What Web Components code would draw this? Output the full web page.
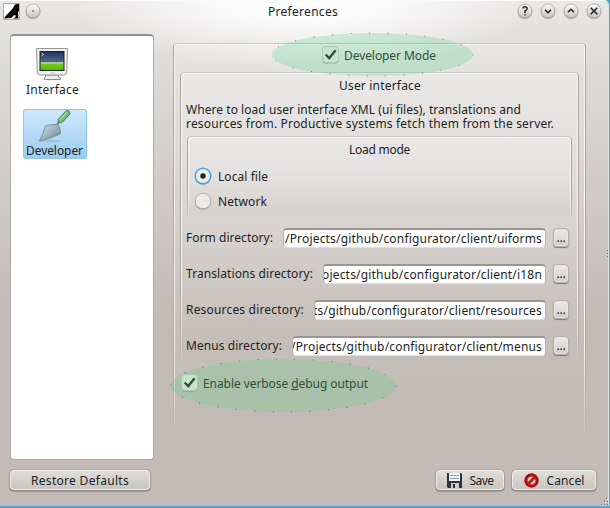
<!DOCTYPE html>
<html lang="en"><head><meta charset="utf-8"><title>Preferences</title>
<style>
html,body{margin:0;height:100%;overflow:hidden}
body{font:12px/16px "Noto Sans","Open Sans",sans-serif;color:#221f1e;background:#4fa6cd}
</style></head><body>
<pref-window></pref-window>

<template id="t-window"><style>
:host{display:flex;flex-direction:column;box-sizing:border-box;width:609px;height:506px;position:relative;border-top:1px solid #fafafa;border-right:1px solid #e5e0de;border-radius:0 5px 0 0;
background:radial-gradient(ellipse 235px 66px at 304px 0,#fff 0,rgba(255,255,255,.75) 40%,rgba(255,255,255,0) 100%),linear-gradient(#e8e7e6 0,#dcdad8 70px,#d1ccca 180px,#c5bcb9 300px,#c4bab7 330px)}
header{display:grid;grid-template-columns:22px 230px 1fr auto;height:33px;align-items:start;padding:2px 6px 0 3px;box-sizing:border-box}
header>svg{display:block;width:17px;height:17px}
.ctl{display:flex;gap:7px}
main{display:grid;grid-template-columns:144px 413px;column-gap:19px;padding-left:10px;height:427px}
.list{background:#fff;border:1px solid #b0aaa7;border-top:2px solid #95918f;border-radius:4px;box-sizing:border-box;padding:12px 0 0 12px;height:426px}
nav-item+nav-item{margin-top:11px}
footer{display:flex;padding:9px 12px 0 10px;gap:8px}
.sp{flex:1}
.body{padding:0 7px}
p{margin:9px 0 0 6px;line-height:14px}
.radios{padding:9px 0 0 7px;display:grid;gap:7px}
.rows{display:grid;gap:15px;padding:9px 10px 0 6px}
.grip{position:absolute;right:0;bottom:0}
.side{position:absolute;right:-1px;top:248px}
</style>
<header>
<svg viewBox="0 0 17 17"><path fill="#fff" stroke="#78b9e2" d="M.5.5h16v16H.5z"/><path d="M1 15.500 3.500 12 7 8.500 10 5l2-3.500L14 1h2v7l-1 1 .4 6.500H10l2.500-1.300V12l-2 .5-2 2.500z"/></svg>
<title-button kind="dot"></title-button>
<fit-text w="70" style="margin:1px 0 0 13px">Preferences</fit-text>
<div class="ctl"><title-button kind="help"></title-button><title-button kind="down"></title-button><title-button kind="up"></title-button><title-button kind="close"></title-button></div>
</header>
<main>
<div class="list">
<nav-item><svg slot="icon" width="34" height="33" viewBox="0 0 34 33"><defs><linearGradient id="s" x2="0" y2="1"><stop stop-color="#1d3264"/><stop offset=".55" stop-color="#566b82"/><stop offset=".6" stop-color="#c7e7a1"/><stop offset=".68" stop-color="#73c91e"/><stop offset="1" stop-color="#51bd0c"/></linearGradient></defs><ellipse cx="17" cy="31" rx="10" ry="1.500" fill="#ddd"/><path fill="#eee" stroke="#8a8a88" d="M10.500 27h13v2l2 1v1.500h-16V30l1-1z"/><path fill="#f1f1ee" stroke="#969693" d="M1.500.5h31l-.8 25-1.700 1.500H4l-1.700-1.500z"/><path fill="#222" d="M4.500 3h25v20h-25z"/><path fill="url(#s)" d="M5.500 4h23v18h-23z"/><path stroke="#fff" fill="none" stroke-width=".8" d="m6.500 5 2 1.500-2 1.500"/><path stroke="#bbb" d="M15 25h5"/></svg><fit-text w="53">Interface</fit-text></nav-item>
<nav-item selected><svg slot="icon" width="36" height="34" viewBox="0 0 36 34"><defs><linearGradient id="b" x2="1" y2="1"><stop stop-color="#d3dfe4"/><stop offset=".5" stop-color="#a0b4be"/><stop offset="1" stop-color="#627984"/></linearGradient></defs><ellipse cx="16" cy="32" rx="12" ry="1.200" fill="#709dbd" opacity=".3"/><path d="M22.500 18q-1-4 3-6" fill="none" stroke="#5d737d" stroke-width="1.600"/><path fill="url(#b)" stroke="#6e848f" stroke-width=".8" stroke-linejoin="round" d="M4.500 32Q8.500 24 10 18q.3-1.500 2-1.700L22.500 15.300q1.200 0 1.500 2l1.500 6q.3 1.200-1 2Q15 30 4.500 32z"/><path stroke="#3f7c4b" stroke-width="5.600" stroke-linecap="round" d="m25.500 11.500 7-7.500"/><path stroke="#76ba7e" stroke-width="4.200" stroke-linecap="round" d="m25.500 11.500 7-7.500"/><path stroke="#a6d9a9" stroke-width="1.200" d="m24.500 11 7-7.500"/></svg><fit-text w="57">Developer</fit-text></nav-item>
</div>
<group-box style="height:397px;margin-top:9px">
 <check-box style="padding:4px 0 0 149px"><fit-text w="92">Developer Mode</fit-text></check-box>
 <div class="body">
 <group-box style="height:294px;margin-top:8px">
  <fit-text w="82" style="margin:6px 0 0 159px">User interface</fit-text>
  <p><fit-text w="335">Where to load user interface XML (ui files), translations and</fit-text><fit-text w="368">resources from. Productive systems fetch them from the server.</fit-text></p>
  <group-box style="height:83px;margin:5px 7px 0">
   <fit-text w="61" style="margin:6px 0 0 162px">Load mode</fit-text>
   <div class="radios"><radio-item checked><fit-text w="50">Local file</fit-text></radio-item><radio-item><fit-text w="49">Network</fit-text></radio-item></div>
  </group-box>
  <div class="rows">
  <path-row field="263"><fit-text w="87">Form directory:</fit-text><fit-text slot="path" w="257">/Projects/github/configurator/client/uiforms</fit-text></path-row>
  <path-row field="223"><fit-text w="127">Translations directory:</fit-text><fit-text slot="path" w="220">ojects/github/configurator/client/i18n</fit-text></path-row>
  <path-row field="232"><fit-text w="118">Resources directory:</fit-text><fit-text slot="path" w="229">ts/github/configurator/client/resources</fit-text></path-row>
  <path-row field="254"><fit-text w="96">Menus directory:</fit-text><fit-text slot="path" w="251">/Projects/github/configurator/client/menus</fit-text></path-row>
  </div>
 </group-box>
 </div>
 <check-box style="padding:9px 0 0 8px"><fit-text w="165">Enable verbose <u>d</u>ebug output</fit-text></check-box>
</group-box>
</main>
<footer><push-button style="width:140px"><fit-text w="98">Restore Defaults</fit-text></push-button><div class="sp"></div>
<push-button style="width:68px"><svg slot="icon" width="15" height="15" viewBox="0 0 15 15"><path fill="#303238" d="M0 0h14l1 1v14H1L0 14z"/><path fill="#f2f6fa" d="M2 0h11v8H2z"/><path stroke="#7ba2c8" d="M3 2.500h9M3 5.500h9"/><path fill="#c8c8c8" d="M4 10h8v5H4z"/><path fill="#303238" d="M6 11h2v4H6z"/></svg><fit-text w="24">Save</fit-text></push-button>
<push-button wide style="width:84px"><svg slot="icon" width="15" height="15" viewBox="0 0 15 15"><circle cx="7.500" cy="7.500" r="7.200" fill="#a50d0d"/><circle cx="7.500" cy="7.500" r="4.300" fill="#d8cfcc" stroke="#d43a32"/><path stroke="#b41a16" stroke-width="2.800" d="m4 11 7-7"/></svg><fit-text w="38">Cancel</fit-text></push-button></footer>
<svg class="side" width="3" height="9"><path stroke="#77706e" stroke-dasharray="1 2" d="M1.500 1v8"/></svg>
<svg class="grip" width="8" height="8"><path fill="#77706e" d="M6 0h1v1H6zM4 3h1v1H4zM7 3h1v1H7zM1 6h1v1H1zM4 6h1v1H4zM7 6h1v1H7z"/><path fill="#eee" d="M7 1h1v1H7zM5 4h1v1H5zM2 7h1v1H2zM5 7h1v1H5z"/></svg>
<green-mark style="left:272px;top:32px;width:201px;height:43px"></green-mark>
<green-mark style="left:171px;top:358px;width:225px;height:53px"></green-mark>
</template>

<script>
const def=(name,html,init)=>customElements.define(name,class extends HTMLElement{
  connectedCallback(){
    if(this.shadowRoot)return;
    this.attachShadow({mode:'open'}).innerHTML=typeof html==='function'?html(this):html;
    if(init)init(this);
  }
});
// Sets the tracking of a line of text so that it takes the width in its "w" attribute.
function fit(el){
  el.style.letterSpacing='0px';
  const w=el.getBoundingClientRect().width;
  if(w)el.style.letterSpacing=((+el.getAttribute('w')-w)/el.textContent.length)+'px';
}
def('fit-text','<style>:host{display:block;width:max-content;white-space:pre}</style><slot></slot>',fit);
const glyph={dot:'<circle cx="8" cy="8" r=".4" fill="#333" stroke-width=".6"/>',
 help:'<path d="M5.900 5.600q0-1.800 2.100-1.800t2.100 1.800q0 1.200-2.100 2.600V10M8 11.200v1.300"/>',
 down:'<path d="m5 6.700 3 3 3-3"/>',up:'<path d="m5 9.300 3-3 3 3"/>',close:'<path d="m4.700 4.700 6.600 6.600M11.300 4.700l-6.600 6.600"/>'};
def('title-button',el=>`<style>:host{display:block;width:16px;height:17px}svg{display:block}</style>
<svg width="16" height="17" viewBox="0 0 16 17"><defs><linearGradient id="g" x2="0" y2="1"><stop stop-color="#fcfcfb"/><stop offset="1" stop-color="#c5c1be"/></linearGradient></defs>
<circle cx="8" cy="8.800" r="7.300" fill="#777" opacity=".6"/><circle cx="8" cy="8" r="7" fill="url(#g)" stroke="#a8a3a0" stroke-width=".8"/><g fill="none" stroke="#222" stroke-width="1.500">${glyph[el.getAttribute('kind')]}</g></svg>`);
def('nav-item',`<style>:host{display:flex;flex-direction:column;width:64px;height:50px;box-sizing:border-box;padding-left:3px;border-radius:3px}
:host([selected]){background:linear-gradient(#d0e9fd,#9acbef);box-shadow:inset 0 0 0 1px #8fc5ec}
:host([selected]) .i{height:36px}
.i{height:35px;padding-left:9px}.i ::slotted(svg){display:block}</style><div class="i"><slot name="icon"></slot></div><slot></slot>`);
def('group-box',`<style>:host{display:flow-root;box-sizing:border-box;position:relative;background:linear-gradient(rgba(255,255,255,.24),rgba(255,255,255,.13) 50%,rgba(190,190,175,.18) 92%,rgba(255,255,255,0));border-radius:4px}
:host::before,:host::after{content:"";position:absolute;inset:0;border:1px solid #aaa5a2;border-radius:4px;pointer-events:none;-webkit-mask:linear-gradient(#000 75%,transparent);mask:linear-gradient(#000 75%,transparent);border-bottom:0;border-top-color:#c9c6c3}
:host::after{inset:1px 1px 0 1px;border-color:#f6f5f4}</style><slot></slot>`);
def('check-box',`<style>:host{display:flex;gap:5px}svg{display:block;margin-top:-1px}::slotted(*){margin-top:1px}</style>
<svg width="17" height="18" viewBox="0 0 17 18"><rect x=".5" y="1.500" width="16" height="16" rx="3.500" fill="#777" opacity=".7"/><rect x=".5" y=".5" width="16" height="16" rx="3.500" fill="#eceae8" stroke="#c9c5c2"/><path fill="none" stroke="#1d1d1d" stroke-width="2.300" d="m3.700 8.500 3.500 3.700 6.400-8"/></svg><slot></slot>`);
def('radio-item',el=>`<style>:host{display:flex;gap:6px;height:18px}svg{display:block;overflow:visible}::slotted(*){margin-top:2px}</style>
<svg width="18" height="18" viewBox="0 0 18 18"><circle cx="9" cy="9.800" r="8" fill="#777" opacity=".6"/><circle cx="9" cy="9" r="7.800" fill="#eceae8" stroke="${el.hasAttribute('checked')?'#45a8d8':'#aca7a3'}" stroke-width="${el.hasAttribute('checked')?1.500:.8}"/>${el.hasAttribute('checked')?'<circle cx="9" cy="9" r="2.700" fill="#222"/>':''}</svg><slot></slot>`);
def('path-row',el=>`<style>:host{display:flex;height:21px}
.l{flex:1;padding-top:2px}.f{box-sizing:border-box;width:${el.getAttribute('field')}px;height:20px;background:#fff;border:1px solid #b7b0ad;border-top:2px solid #9b9592;border-bottom-color:#e2dedb;border-radius:4px;display:flex;justify-content:flex-end;overflow:hidden;padding-right:3px}
.f ::slotted(*){flex:none;margin-top:1px}
.b{box-sizing:border-box;width:16px;height:19px;margin-left:7px;border:1px solid #b5b0ac;border-radius:4px;background:linear-gradient(#eceae8,#d0ccc8);box-shadow:0 1px 1px #777,inset 0 0 0 1px #e8e5e3;text-align:center;line-height:17px;letter-spacing:-.2px}</style>
<div class="l"><slot></slot></div><div class="f"><slot name="path"></slot></div><div class="b">...</div>`);
def('push-button',`<style>:host{display:flex;align-items:center;justify-content:center;gap:8px;height:20px;box-sizing:border-box;padding-top:2px;border:1px solid #efedea;border-radius:4px;background:linear-gradient(#e0ddda,#c8c4c0);box-shadow:0 0 0 .5px #aaa39f,0 1px 2px #55504d}
::slotted(svg){display:block;margin-top:-2px}</style><slot name="icon"></slot><slot></slot>`);
// Translucent oval highlight with small ticks along its rim.
def('green-mark',`<style>:host{display:block;position:absolute;pointer-events:none}svg{display:block;width:100%;height:100%;overflow:visible}</style><svg><ellipse cx="50%" cy="50%" rx="50%" ry="50%" fill="#5ad084" fill-opacity=".26"/><ellipse cx="50%" cy="50%" rx="50%" ry="50%" fill="none" stroke="#24362a" stroke-opacity=".6" stroke-dasharray="1 17.500"/></svg>`);
def('pref-window',document.getElementById('t-window').innerHTML,el=>el.shadowRoot.querySelectorAll('fit-text').forEach(fit));
</script></body></html>
